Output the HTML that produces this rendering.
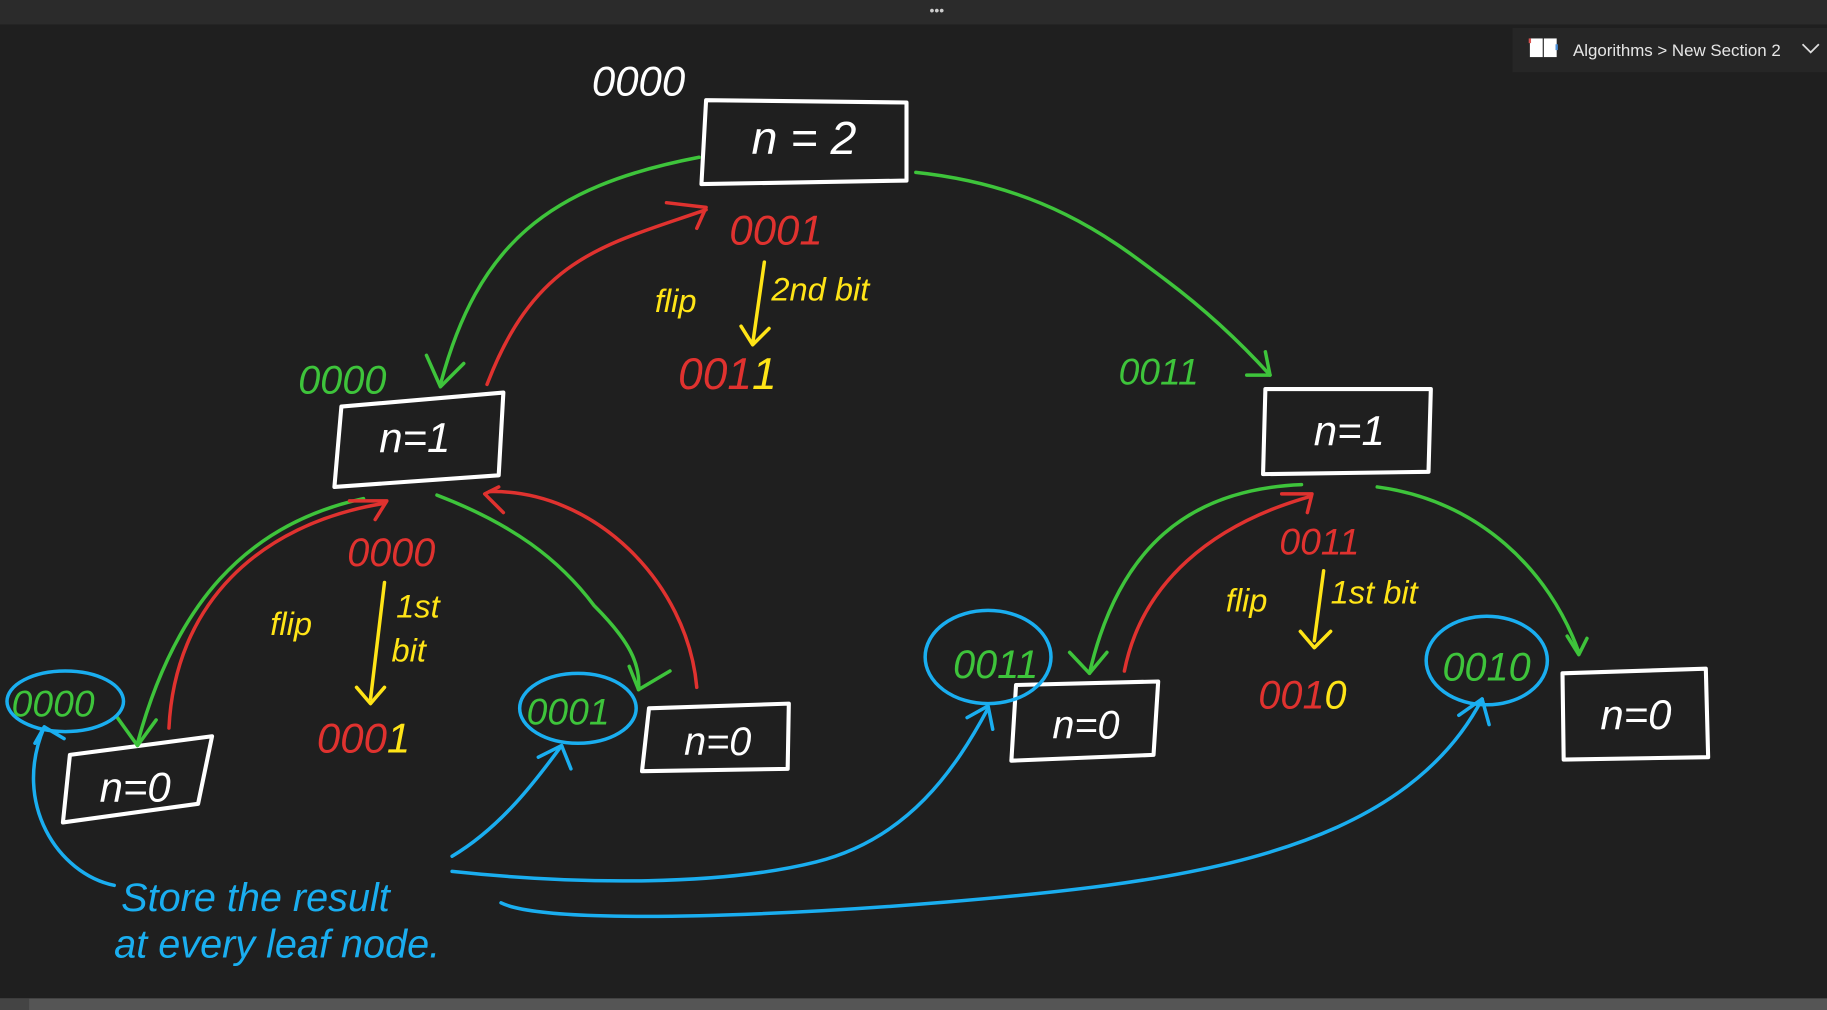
<!DOCTYPE html>
<html><head><meta charset="utf-8"><style>
html,body{margin:0;padding:0;background:#1f1f1f;overflow:hidden}
svg{display:block}
</style></head><body>
<svg width="1827" height="1010" viewBox="0 0 1568 867" preserveAspectRatio="none" xmlns="http://www.w3.org/2000/svg">
<rect width="1568" height="867" fill="#1f1f1f"/>
<rect width="1568" height="21" fill="#2b2b2b"/>
<text x="804" y="13" fill="#ccc" font-family="Liberation Sans" font-size="12" text-anchor="middle">•••</text>
<rect x="1298" y="24" width="270" height="38" fill="#262626"/>
<rect x="1313" y="33" width="11" height="16" fill="#fff"/><rect x="1325" y="33" width="11" height="16" fill="#fff"/>
<rect x="1312" y="33" width="2" height="4" fill="#d9534f"/><rect x="1335" y="38" width="2" height="5" fill="#4a8fd9"/>
<text x="1350" y="48" fill="#e6e6e6" font-family="Liberation Sans, sans-serif" font-size="14.5">Algorithms &gt; New Section 2</text>
<path d="M1547 38 l7 7 l7 -7" stroke="#ddd" stroke-width="1.5" fill="none"/>
<rect x="0" y="857" width="1568" height="10" fill="#555"/><rect x="0" y="857" width="25" height="10" fill="#444"/>

<g fill="none" stroke-linecap="round" stroke-linejoin="round">
<g stroke="#fff" stroke-width="3.5">
<path d="M606 86 L778 88 L778 155 L602 158 Z"/>
<path d="M293 349 L432 337 L428 408 L287 418 Z"/>
<path d="M1086 334 L1228 334 L1226 405 L1084 407 Z"/>
<path d="M60 648 L182 632 L170 690 L54 706 Z"/>
<path d="M557 608 L677 604 L676 660 L551 662 Z"/>
<path d="M872 588 L994 585 L990 648 L868 653 Z"/>
<path d="M1341 578 L1464 574 L1466 650 L1342 652 Z"/>
</g>
<g stroke="#3ec43b" stroke-width="3">
<path d="M600 135 C470 160 410 210 378 330"/><path d="M366 305 L378 332 L398 312"/>
<path d="M786 148 C900 160 960 210 1000 240 C1040 270 1070 300 1090 322"/><path d="M1070 322 L1090 322 L1086 302"/>
<path d="M312 428 C210 450 150 520 118 638"/><path d="M100 615 L118 640 L134 618"/>
<path d="M375 425 C440 450 480 480 510 520 C540 550 550 570 548 592"/><path d="M540 572 L548 592 L575 576"/>
<path d="M1117 416 C1020 420 960 470 935 578"/><path d="M918 560 L935 578 L950 560"/>
<path d="M1182 418 C1270 430 1330 490 1355 560"/><path d="M1345 546 L1355 562 L1362 548"/>
</g>
<g stroke="#e0322f" stroke-width="3">
<path d="M418 330 C460 220 520 210 606 180"/><path d="M572 174 L606 178 L598 196"/>
<path d="M145 625 C150 520 220 450 330 432"/><path d="M300 430 L332 430 L322 446"/>
<path d="M598 590 C590 500 510 420 420 422"/><path d="M428 418 L416 424 L432 440"/>
<path d="M965 576 C980 500 1040 450 1125 426"/><path d="M1100 424 L1126 424 L1122 440"/>
</g>
<g stroke="#ffe417" stroke-width="3">
<path d="M656 225 L646 295"/><path d="M636 280 L646 296 L660 282"/>
<path d="M330 500 L318 600"/><path d="M306 590 L318 604 L330 590"/>
<path d="M1136 490 L1128 550"/><path d="M1116 542 L1128 556 L1142 542"/>
</g>
<g stroke="#1aaef0" stroke-width="3">
<ellipse cx="56" cy="602" rx="50" ry="26"/>
<ellipse cx="496" cy="608" rx="50" ry="30"/>
<ellipse cx="848" cy="564" rx="54" ry="40"/>
<ellipse cx="1276" cy="567" rx="52" ry="38"/>
<path d="M98 760 C50 750 10 690 38 624"/><path d="M30 638 L38 624 L55 634"/>
<path d="M388 735 C430 710 460 670 482 640"/><path d="M462 650 L482 640 L490 660"/>
<path d="M388 748 C500 760 620 760 700 740 C780 720 820 660 848 608"/><path d="M830 616 L848 606 L852 626"/>
<path d="M430 775 C480 800 800 780 950 760 C1100 740 1220 700 1272 600"/><path d="M1252 614 L1272 600 L1278 622"/>
</g>
</g>

<g font-family="Liberation Sans, sans-serif" font-style="italic">
<text x="690" y="132" fill="#fff" font-size="40" text-anchor="middle">n = 2</text>
<text x="356" y="388" fill="#fff" font-size="36" text-anchor="middle">n=1</text>
<text x="1158" y="382" fill="#fff" font-size="36" text-anchor="middle">n=1</text>
<text x="116" y="688" fill="#fff" font-size="36" text-anchor="middle">n=0</text>
<text x="616" y="648" fill="#fff" font-size="34" text-anchor="middle">n=0</text>
<text x="932" y="634" fill="#fff" font-size="34" text-anchor="middle">n=0</text>
<text x="1404" y="626" fill="#fff" font-size="36" text-anchor="middle">n=0</text>
<text x="508" y="82" fill="#fff" font-size="36">0000</text>
<text x="626" y="210" fill="#e0322f" font-size="36">0001</text>
<text x="582" y="334" fill="#e0322f" font-size="38">001<tspan fill="#ffe417">1</tspan></text>
<text x="256" y="338" fill="#3ec43b" font-size="34">0000</text>
<text x="960" y="330" fill="#3ec43b" font-size="32">0011</text>
<text x="298" y="486" fill="#e0322f" font-size="34">0000</text>
<text x="1098" y="476" fill="#e0322f" font-size="32">0011</text>
<text x="272" y="646" fill="#e0322f" font-size="36">000<tspan fill="#ffe417">1</tspan></text>
<text x="1080" y="608" fill="#e0322f" font-size="34">001<tspan fill="#ffe417">0</tspan></text>
<text x="10" y="615" fill="#3ec43b" font-size="32">0000</text>
<text x="452" y="622" fill="#3ec43b" font-size="32">0001</text>
<text x="818" y="582" fill="#3ec43b" font-size="34">0011</text>
<text x="1238" y="584" fill="#3ec43b" font-size="34">0010</text>
<g fill="#ffe417" font-size="28">
<text x="562" y="268">flip</text><text x="662" y="258">2nd bit</text>
<text x="232" y="545">flip</text><text x="340" y="530">1st</text><text x="336" y="568">bit</text>
<text x="1052" y="525">flip</text><text x="1142" y="518">1st bit</text>
</g>
<g fill="#1aaef0" font-size="34">
<text x="104" y="782">Store the result</text>
<text x="98" y="822">at every leaf node.</text>
</g>
</g>
</svg>
</body></html>
